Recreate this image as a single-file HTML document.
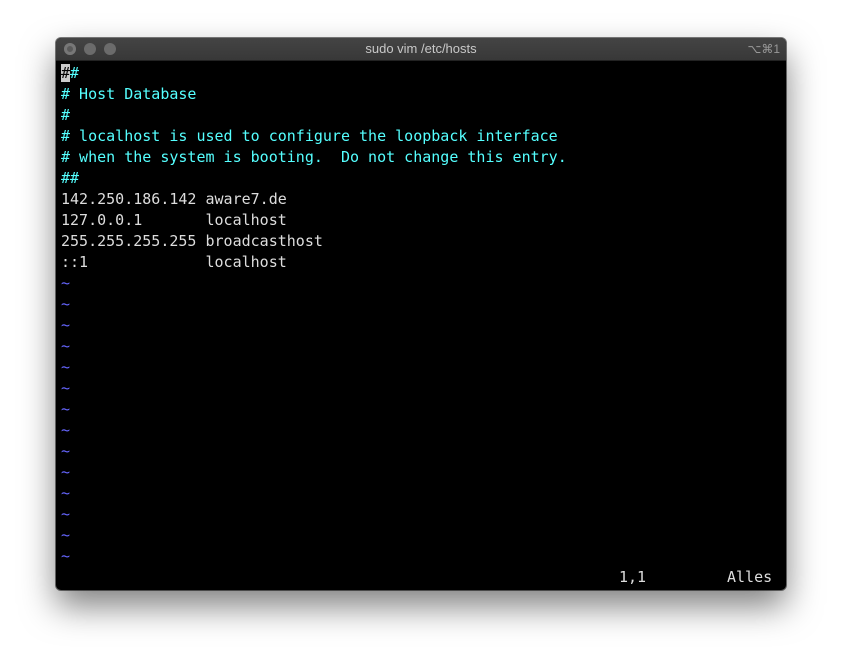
<!DOCTYPE html>
<html><head><style>
body{margin:0;width:842px;height:664px;background:#fff;position:relative;overflow:hidden;font-family:"Liberation Sans",sans-serif}
.win{position:absolute;left:56px;top:38px;width:730px;height:552px;background:#000;border-radius:5px;box-shadow:0 16px 34px rgba(0,0,0,.5),0 0 0 1px rgba(0,0,0,.5);overflow:hidden}
.tb{height:22px;background:linear-gradient(#444,#383838);border-bottom:1px solid #222;position:relative;color:#c8c8c8;font-size:13px;text-align:center;line-height:22px}
.dot{position:absolute;top:5px;width:12px;height:12px;border-radius:50%;background:#6b6b6b}
.sc{position:absolute;right:6px;top:0;color:#999;font-size:12px}
pre{margin:0;position:absolute;left:5px;top:25px;font:15px/21px "DejaVu Sans Mono",monospace;color:#ddd}
.c{color:#5ff}.t{color:#66f}
.cur{background:#ccc;color:#000}
.st{position:absolute;top:529px;font:15px/21px "DejaVu Sans Mono",monospace;color:#ddd}
</style></head><body>
<div class="win">
<div class="tb"><span class="dot" style="left:8px;background:#5a5a5a;box-shadow:inset 0 0 0 3px #777"></span><span class="dot" style="left:28px"></span><span class="dot" style="left:48px"></span>sudo vim /etc/hosts<span class="sc">⌥⌘1</span></div>
<pre><span class="c"><span class="cur">#</span>#
# Host Database
#
# localhost is used to configure the loopback interface
# when the system is booting.  Do not change this entry.
##</span>
142.250.186.142 aware7.de
127.0.0.1       localhost
255.255.255.255 broadcasthost
::1             localhost
<span class="t">~
~
~
~
~
~
~
~
~
~
~
~
~
~</span></pre>
<div class="st" style="left:563px">1,1</div>
<div class="st" style="left:671px">Alles</div>
</div>
</body></html>
